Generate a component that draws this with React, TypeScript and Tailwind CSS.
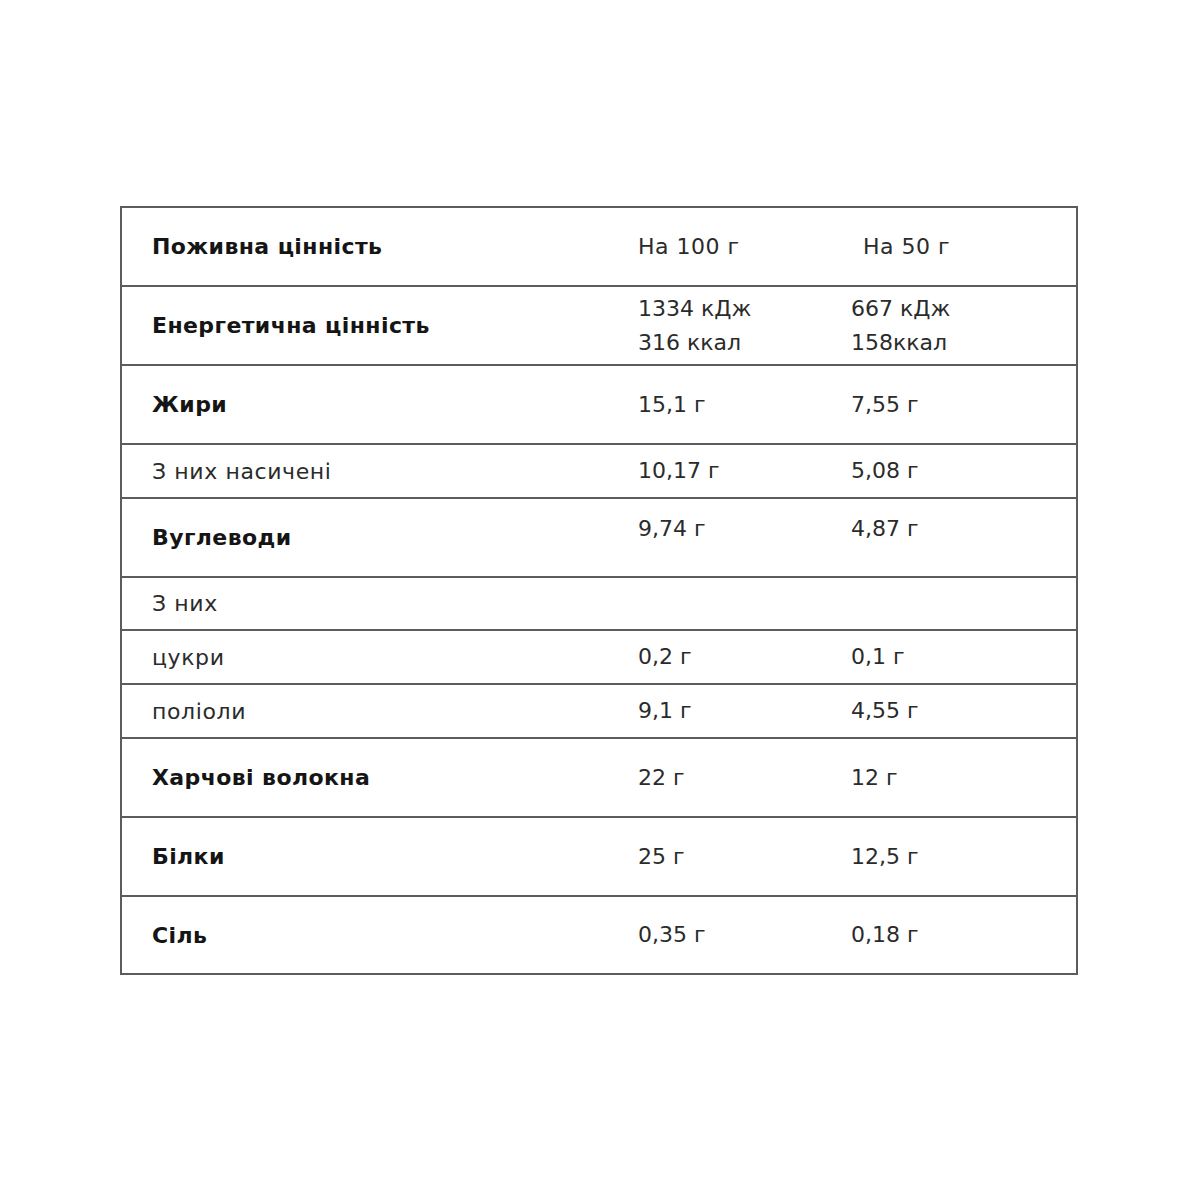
import React from "react";

type Row = {
  label: string;
  bold?: boolean;
  tall?: boolean;
  a?: string[];
  b?: string[];
  raised?: boolean;
  h?: string;
};

const rows: Row[] = [
  { label: "Енергетична цінність", bold: true, tall: true, a: ["1334 кДж", "316 ккал"], b: ["667 кДж", "158ккал"] },
  { label: "Жири", bold: true, tall: true, a: ["15,1 г"], b: ["7,55 г"] },
  { label: "З них насичені", a: ["10,17 г"], b: ["5,08 г"] },
  { label: "Вуглеводи", bold: true, tall: true, a: ["9,74 г"], b: ["4,87 г"], raised: true },
  { label: "З них", h: "h-[53px]" },
  { label: "цукри", a: ["0,2 г"], b: ["0,1 г"] },
  { label: "поліоли", a: ["9,1 г"], b: ["4,55 г"] },
  { label: "Харчові волокна", bold: true, tall: true, a: ["22 г"], b: ["12 г"] },
  { label: "Білки", bold: true, tall: true, a: ["25 г"], b: ["12,5 г"] },
  { label: "Сіль", bold: true, tall: true, a: ["0,35 г"], b: ["0,18 г"], h: "h-[78px]" },
];

function Cell({ lines, raised }: { lines?: string[]; raised?: boolean }) {
  return (
    <div
      className={
        "flex flex-col pl-[30px] text-[22px] tracking-[0px] text-[#2b2b2b] " +
        (raised ? "self-start pt-[16px]" : "justify-center") +
        (lines && lines.length > 1 ? " leading-[34px]" : " leading-[28px]")
      }
    >
      {(lines ?? []).map((l) => (
        <span key={l}>{l}</span>
      ))}
    </div>
  );
}

export default function App() {
  return (
    <div
      className="min-h-[1200px] w-[1200px] bg-white pt-[206px]"
      style={{ fontFamily: '"DejaVu Sans", "Noto Sans", sans-serif' }}
    >
      <div className="ml-[120px] w-[958px] border-2 border-b-0 border-[#5c5c5c]">
        <div className="grid h-[79px] grid-cols-[486px_213px_1fr] items-center border-b-2 border-[#5c5c5c]">
          <div className="pl-[30px] text-[22px] font-bold tracking-[0.4px] text-[#151515]">Поживна цінність</div>
          <div className="pl-[30px] text-[22px] tracking-[0.5px] text-[#2b2b2b]">На 100 г</div>
          <div className="pl-[42px] text-[22px] tracking-[0.5px] text-[#2b2b2b]">На 50 г</div>
        </div>
        {rows.map((r) => (
          <div
            key={r.label}
            className={
              "grid grid-cols-[486px_213px_1fr] items-center border-b-2 border-[#5c5c5c] " +
              (r.h ?? (r.tall ? "h-[79px]" : "h-[54px]"))
            }
          >
            <div
              className={
                "pl-[30px] text-[22px] " +
                (r.bold ? "font-bold tracking-[0.4px] text-[#151515]" : "tracking-[0.6px] text-[#2b2b2b]")
              }
            >
              {r.label}
            </div>
            <Cell lines={r.a} raised={r.raised} />
            <Cell lines={r.b} raised={r.raised} />
          </div>
        ))}
      </div>
    </div>
  );
}
